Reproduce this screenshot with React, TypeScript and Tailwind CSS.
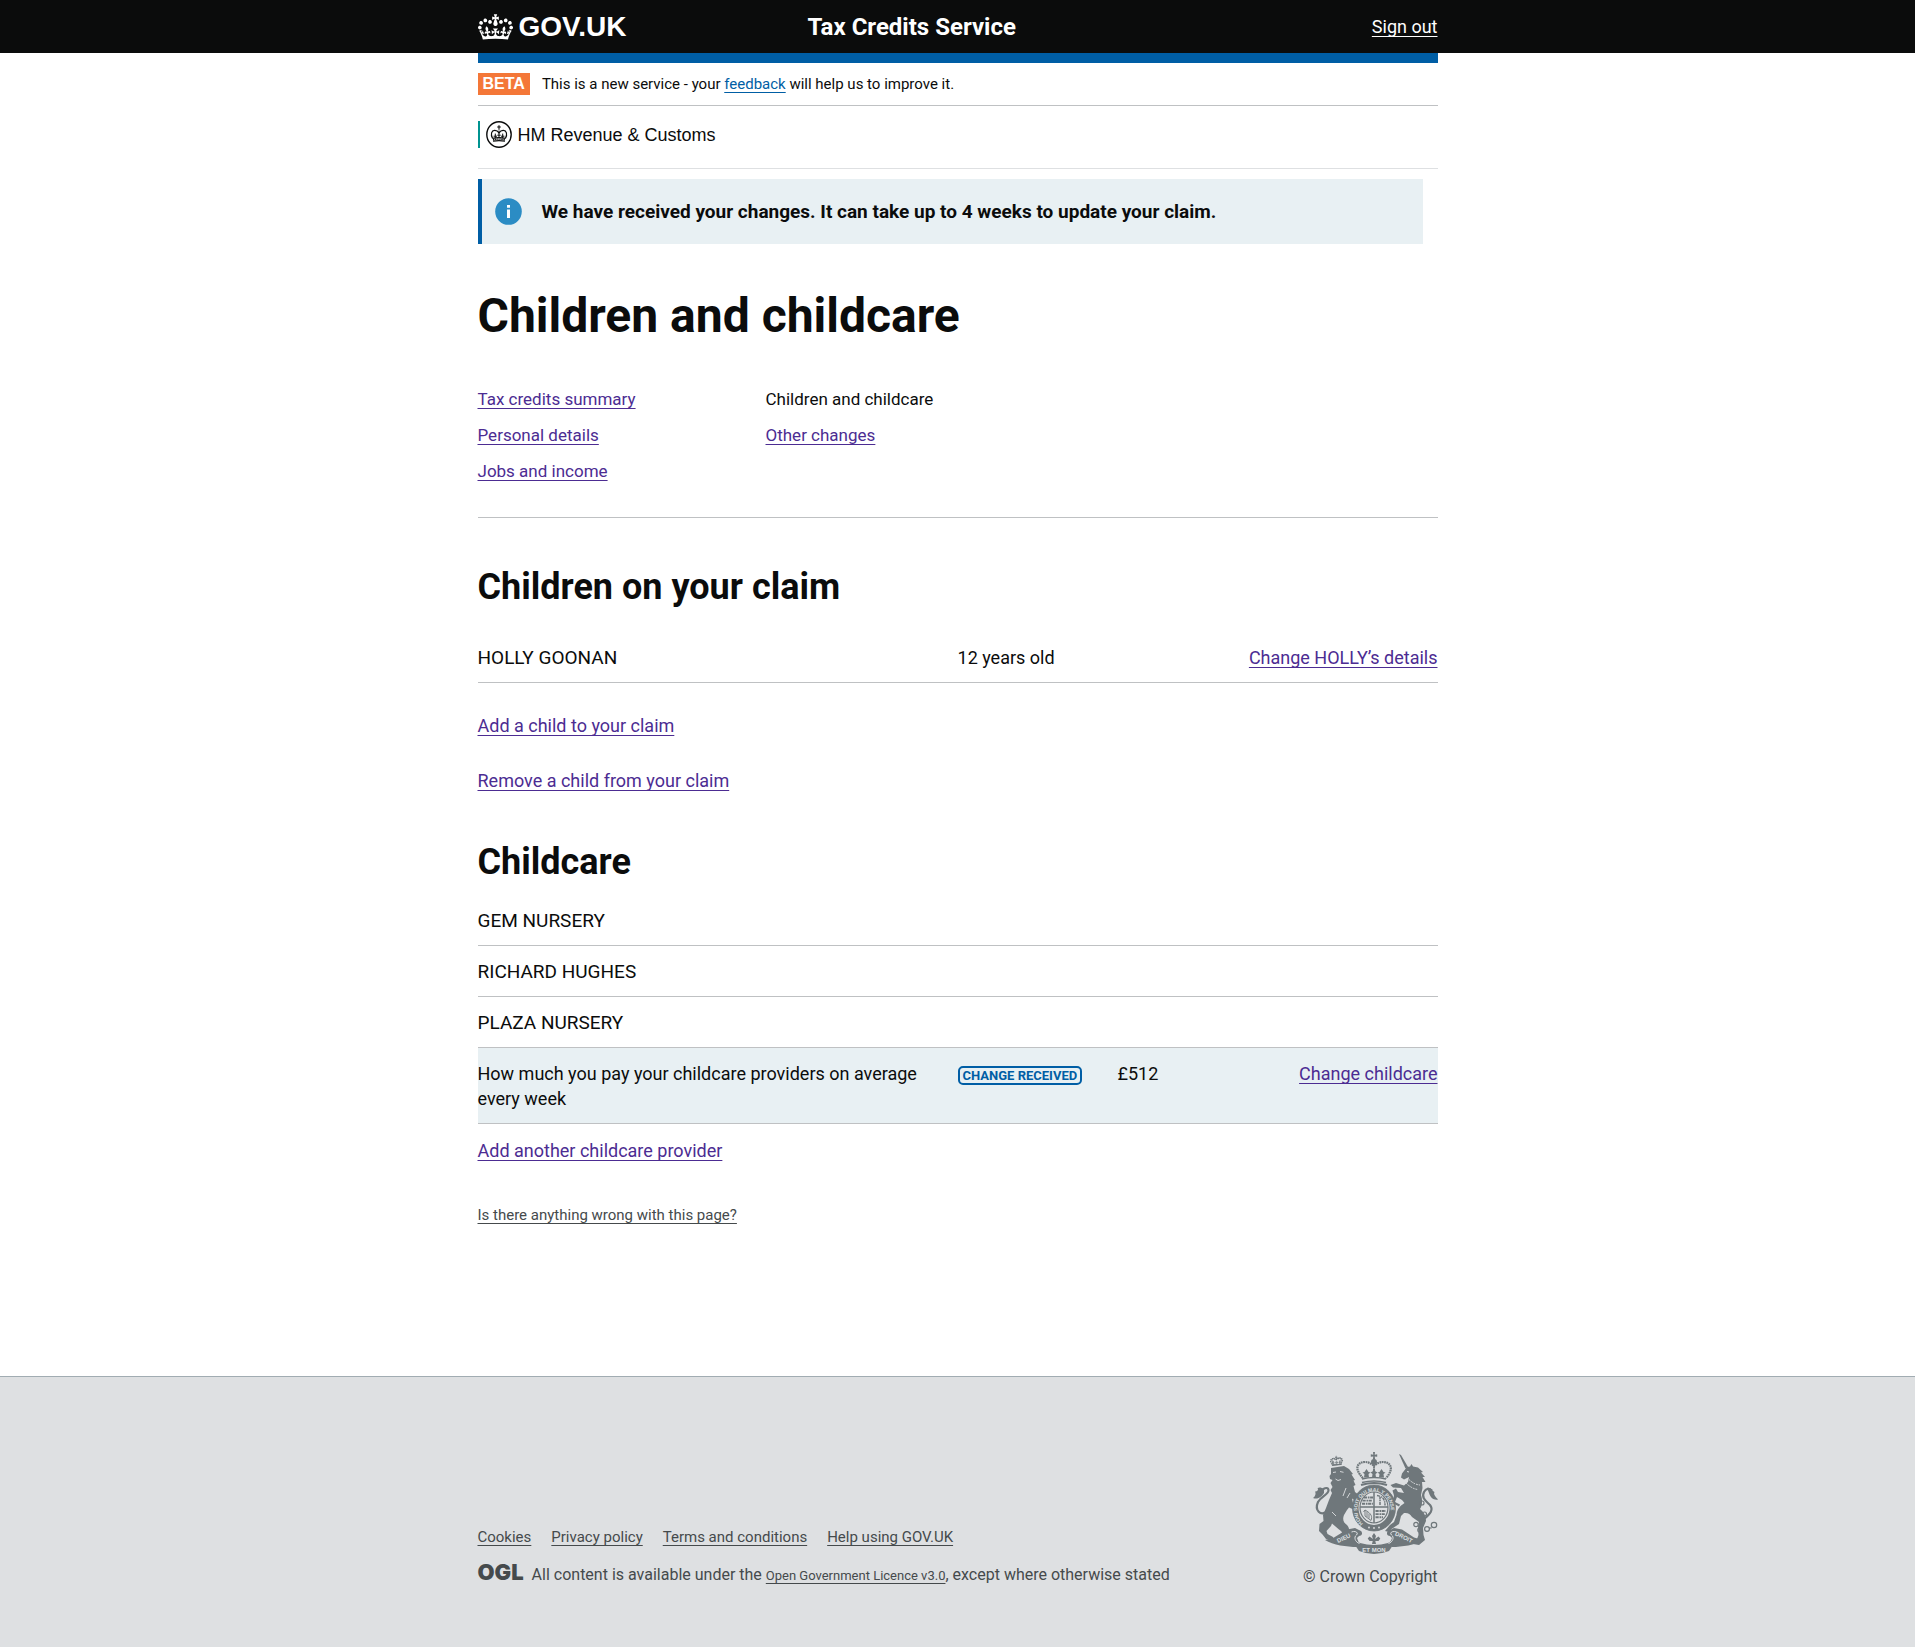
import React from "react";

const CROWN =
  "M25 30.2c3.5 1.5 7.7-.2 9.1-3.7 1.5-3.6-.2-7.8-3.9-9.2-3.6-1.4-7.6.3-9.1 3.9-1.4 3.5.3 7.5 3.9 9zM9 39.5c3.6 1.5 7.8-.2 9.2-3.7 1.5-3.6-.2-7.8-3.9-9.1-3.6-1.5-7.6.2-9.1 3.8-1.4 3.5.3 7.5 3.8 9zM4.4 57.2c3.5 1.5 7.7-.2 9.1-3.8 1.5-3.6-.2-7.7-3.9-9.1-3.5-1.5-7.6.3-9.1 3.8-1.4 3.5.3 7.6 3.9 9.1zm38.3-21.4c3.5 1.5 7.7-.2 9.1-3.8 1.5-3.6-.2-7.7-3.9-9.1-3.6-1.5-7.6.3-9.1 3.8-1.3 3.6.4 7.7 3.9 9.1zm64.4-5.6c-3.6 1.5-7.8-.2-9.1-3.7-1.5-3.6.2-7.8 3.8-9.2 3.6-1.4 7.7.3 9.2 3.9 1.3 3.5-.4 7.5-3.9 9zm15.9 9.3c-3.6 1.5-7.7-.2-9.1-3.7-1.5-3.6.2-7.8 3.7-9.1 3.6-1.5 7.7.2 9.2 3.8 1.5 3.5-.3 7.5-3.8 9zm4.7 17.7c-3.6 1.5-7.8-.2-9.2-3.8-1.5-3.6.2-7.7 3.9-9.1 3.6-1.5 7.7.3 9.2 3.8 1.3 3.5-.4 7.6-3.9 9.1zM89.3 35.8c-3.6 1.5-7.8-.2-9.2-3.8-1.4-3.6.2-7.7 3.9-9.1 3.6-1.5 7.7.3 9.2 3.8 1.4 3.6-.3 7.7-3.9 9.1zM69.7 17.7l8.9 4.7V9.3l-8.9 2.8c-.2-.3-.5-.6-.9-.9L72.4 0H59.6l3.5 11.2c-.3.3-.6.5-.9.9l-8.8-2.8v13.1l8.8-4.7c.3.3.6.7.9.9l-5 15.4v.1c-.2.8-.4 1.6-.4 2.4 0 4.1 3.1 7.5 7 8.1h.2c.3 0 .7.1 1 .1.4 0 .7 0 1-.1h.2c4-.6 7.1-4.1 7.1-8.1 0-.8-.1-1.7-.4-2.4V34l-5.1-15.4c.4-.2.7-.6 1-.9zM66 92.8c16.9 0 32.8 1.1 47.1 3.2 4-16.9 8.9-26.7 14-33.5l-9.6-3.4c1 4.9 1.1 7.2 0 10.2-1.5-1.4-3-4.3-4.2-8.7L108.6 76c2.8-2 5-3.2 7.5-3.3-4.4 9.4-10 11.9-13.6 11.2-4.3-.8-6.3-4.6-5.6-7.9 1-4.7 5.7-5.9 8-.5 4.3-8.7-3-11.4-7.6-8.8 7.1-7.2 7.9-13.5 2.1-21.1-8 6.1-8.1 12.3-4.5 20.8-4.7-5.4-12.1-2.5-9.5 6.2 3.4-5.2 7.9-2 7.2 3.1-.6 4.3-6.4 7.8-13.5 7.2-10.3-.9-10.9-8-11.2-13.8 2.5-.5 7.1 1.8 11 7.3L80.2 60c-4.1 4.4-8 5.3-12.3 5.4 1.4-4.4 8-11.6 8-11.6H55.5s6.4 7.2 7.9 11.6c-4.2-.1-8-1-12.3-5.4l1.4 16.4c3.9-5.5 8.5-7.7 10.9-7.3-.3 5.8-.9 12.8-11.1 13.8-7.2.6-12.9-2.9-13.5-7.2-.7-5 3.8-8.3 7.1-3.1 2.7-8.7-4.6-11.6-9.4-6.2 3.7-8.5 3.6-14.7-4.6-20.8-5.8 7.6-5 13.9 2.2 21.1-4.7-2.6-11.9.1-7.7 8.8 2.3-5.5 7.1-4.2 8.1.5.7 3.3-1.3 7.1-5.7 7.9-3.5.7-9-1.8-13.5-11.2 2.5.1 4.7 1.3 7.5 3.3l-4.7-15.4c-1.2 4.4-2.7 7.2-4.3 8.7-1.1-3-.9-5.3 0-10.2l-9.5 3.4c5 6.9 9.9 16.7 14 33.5 14.8-2.1 30.8-3.2 47.7-3.2z";

const CONTAINER = "mx-auto w-full max-w-[960px]";
const UNDERLINE = "underline decoration-1 underline-offset-3 [text-decoration-skip-ink:none]";

type LinkProps = { children: React.ReactNode; tone?: string };

function Link({ children, tone = "text-[#4c2c92]" }: LinkProps) {
  return (
    <a href="#" className={`${tone} ${UNDERLINE}`}>
      {children}
    </a>
  );
}

function HmrcCrest() {
  return (
    <svg viewBox="0 0 26 27" className="h-[27px] w-[26px]" aria-hidden="true">
      <ellipse cx="13" cy="13.5" rx="12.2" ry="12.7" fill="none" stroke="#0b0c0c" strokeWidth="1.4" />
      <g fill="none" stroke="#0b0c0c">
        <path d="M13 4.2v4.6M11.2 6h3.6" strokeWidth="1.1" />
        <path d="M6.6 17.5C4.2 13 5.6 9.6 8.6 9.4c2.2-.1 3.6 1.2 4.4 2.4.8-1.2 2.2-2.5 4.4-2.4 3 .2 4.4 3.6 2 8.1" strokeWidth="1.2" />
        <path d="M13 9.5V17M9.3 12.6v4.6M16.7 12.6v4.6M7.6 15.2h3.4M11.3 14.2h3.4M15 15.2h3.4" strokeWidth="1" />
        <path d="M6.6 17.4q6.4-1.6 12.8 0M7 20.2q6-1.3 12 0" strokeWidth="1.2" />
        <path d="M7 18.8q6-1.4 12 0" strokeWidth="1.4" strokeDasharray="1.4 .7" />
      </g>
    </svg>
  );
}

function CoatOfArms() {
  const ink = "#6f777b";
  const paper = "#dee0e2";
  return (
    <svg viewBox="0 0 125 102" className="h-[102px] w-[125px]" role="img" aria-label="Royal coat of arms">
      {/* lion crown */}
      <g transform="translate(16.5 4.5) rotate(-5) scale(.1)" fill={ink}>
        <path d={CROWN} />
        <path d="M20 30Q40 10 62 36Q90 10 116 30L104 90H28Z" fill="none" stroke={ink} strokeWidth="9" />
      </g>
      {/* lion tail */}
      <path
        d="M15 59C7 65 1.500 58 5 50C8 44 15 43 15.500 38.500C15.600 35.500 12 35 9.500 38"
        fill="none"
        stroke={ink}
        strokeWidth="2.200"
      />
      <path d="M11 37C8 35 5.500 35 4.500 36.500C6 38 4 39.500 2 39.500C3.500 42 1.500 45 0 46C5 48 9 44.500 11 41Z" fill={ink} />
      {/* lion */}
      <path
        d="M18 16L31 14L36 17L40 22L38.500 22.500L42 28L40.500 28.500L42.500 33L40.500 34L42 40L46 43L49 42L50.500 44L46 48L43 49L39 46.500L40 51L44 54L47 53.500L48 56L43 58.500L36 55.500L34 58L31 63C29 68 31 71 34 73C37 76 36 80 37 83L41 85L40 88L31 87.500C30 82 29 79 26 77.500L19 71.500L18 74L13.500 79L14.500 82L20 85L20.500 88.500L13 87L9.500 82.500L6 79L6.500 72L10.500 69L10 63L13 56L16 48L19 41L17.500 38L19.500 35L17.500 31L19.500 28L17 27L16.500 24L18 22Z"
        fill={ink}
      />
      <path d="M20 20.500l3-.5M27 19.500l3.500.8M22.500 27l2.500 1.500 3-1M33 36l-3 8M37 41l-3 5M19 60l4 4" stroke={paper} strokeWidth=".9" fill="none" />
      {/* horn */}
      <path d="M86 2L88 3L95 15L92.500 16.500Z" fill={ink} />
      {/* unicorn */}
      <path
        d="M94 15L97 14.500L98.500 12L100 14.500L105 15.500L110 20L108 20.500L112 25L109.500 25L112.500 30L109 30L109.500 36L108 43C110 49 109 54 107 57C111 60 113 64 113 69L110 76L110.500 83L112 88L106 93L100 92L104 87L105.500 83L105 74L106 70L99 65C97 62 95 60.500 91 61L88 64L86 72L78.500 77L76 80L72 79L77 73L81 70L83.500 63C84 57 87 54 91.500 51L89 48L84 45L82 50L87 52.500L86 54.500L79.500 51L81 43.500L79.500 38.500L83 36.500L85 40L91 41L88 36L80 35.500L77.500 33L83 31L91 33.500L95 30L96 25L91 27.500L88 25.500L89 21.500Z"
        fill={ink}
      />
      <path d="M93 31q6 6 12 6.500M96 27.500q5 5 11 5.500" stroke={paper} strokeWidth="1" strokeDasharray="1.800 1" fill="none" />
      <path d="M94 19.500l2 .5" stroke={paper} strokeWidth="1" />
      {/* unicorn tail */}
      <path
        d="M111 67C117 62 121 58 117 53C113 49 108 46 111 40C113 36 116 36 119 38.500"
        fill="none"
        stroke={ink}
        strokeWidth="2.200"
      />
      <path d="M114 36C118 34.500 119 39 121.500 40C120 42.500 123 45 125 47.500C121 48.500 117.500 46 116 41Z" fill={ink} />
      {/* chain */}
      <g fill="none" stroke={ink} strokeWidth="1.200">
        <circle cx="109" cy="51" r="2" />
        <circle cx="111.500" cy="62" r="2" />
        <circle cx="103" cy="72.500" r="2.200" />
        <circle cx="107" cy="78" r="2.200" />
        <circle cx="114" cy="77" r="2.400" />
        <circle cx="121" cy="73" r="2.700" />
        <path d="M116.200 76h2.400" />
      </g>
      {/* crown above the shield */}
      <g fill="none" stroke={ink}>
        <path d="M50 26C40 16 45 10 52 10C57 10 60 13 61 14C62 13 65 10 70 10C77 10 82 16 73 26" strokeWidth="2.200" strokeDasharray="1.700 .6" />
        <path d="M61 13V26" strokeWidth="1.800" strokeDasharray="1.500 .5" />
        <path d="M49 27q12-3 24 0M49 30.500q12-3 24 0" strokeWidth="1.700" />
        <path d="M48 33q13-4 26 0" strokeWidth="2.200" />
      </g>
      <g fill={ink}>
        <circle cx="61" cy="10" r="3" />
        <path d="M60 0h2l-.3 2.700 2.500-.4v2.400l-2.500-.3.500 3h-2.400l.5-3-2.500.3V2.300l2.500.4z" />
        <path d="M53.500 17l2 3 2 .5-2 1.500.5 3.500h-5l.5-3.500-2-1.500 2-.5zM68.500 17l2 3 2 .5-2 1.500.5 3.500h-5l.5-3.500-2-1.500 2-.5zM61 16l1.500 3.500 2 1-2 1.500.5 3.500h-4l.5-3.500-2-1.500 2-1z" />
      </g>
      {/* garter and shield */}
      <ellipse cx="61" cy="56" rx="18.500" ry="20" fill={paper} stroke={ink} strokeWidth="6" />
      <ellipse cx="61" cy="56" rx="21.500" ry="23" fill="none" stroke={ink} strokeWidth=".8" />
      <path id="garter-text" d="M50 71.500A16.800 18.300 0 1 1 72 71.500" fill="none" />
      <text fill={paper} fontSize="5" fontWeight="700" fontFamily="Liberation Sans, sans-serif">
        <textPath href="#garter-text">HONI SOIT QUI MAL Y PENSE</textPath>
      </text>
      <circle cx="56" cy="75.500" r=".9" fill={paper} />
      <circle cx="61" cy="76" r=".9" fill={paper} />
      <circle cx="66" cy="75.500" r=".9" fill={paper} />
      <ellipse cx="61" cy="55.500" rx="14" ry="15.500" fill={paper} stroke={ink} strokeWidth="1.200" />
      <path d="M61 40v31M47 55h28" stroke={ink} strokeWidth="1.500" />
      <g stroke={ink} strokeWidth="1.900" fill="none" strokeDasharray="3.200 .8 1.500 .6">
        <path d="M51 45.500h9M49.500 48.600h10M49 51.700h11M62.500 59h10.500M62.500 62.100h9.500M62.500 65.200h7.500" />
        <path d="M64 43.500c6 1 8 4 8 10M67 53V45" strokeWidth="1.500" />
      </g>
      <path d="M52 58v6l6 4.500c1.500-4 .5-7-6-10.500zM54 59.500v5.500M56 61.500v5M52 58l-1.500 2" stroke={ink} strokeWidth=".9" fill="none" />
      {/* fleur-de-lis at the foot of the shield */}
      <path d="M61 81l2 3-1 3 3.500-2.500 1.800 2-1.800 2.500H62.300l.7 3h-4l.7-3h-3.200l-1.800-2.500 1.800-2L60 87l-1-3z" fill={ink} />
      {/* motto ribbon */}
      <path d="M12 88L21 85.500L34 77.500L42 76L48 79C50 81 49 84 46 84L44 86L45.500 90L44 95C34 95 20 93 12 88Z" fill={ink} />
      <path d="M110 88L101 85.500L89 77.500L81 76L75 79C73 81 74 84 77 84L79 86L77.500 90L79 95C89 95 102 93 110 88Z" fill={ink} />
      <path d="M40.500 84C43 88 44 90 47 91Q61 95 75 91C78 90 79 88 81 84L80 93L76 99Q61 105 46 99L42 93Z" fill={ink} />
      <path d="M38.500 80C42 78.500 46 80.500 43.500 83C40.500 85 42 90 46.500 91.500M83.500 80C80 78.500 76 80.500 78.500 83C81.500 85 80 90 75.500 91.500" stroke={paper} strokeWidth="1" fill="none" />
      <g fill={paper} fontSize="6" fontWeight="700" fontFamily="Liberation Sans, sans-serif" textAnchor="middle">
        <text transform="translate(31.500 88) rotate(-24)">DIEU</text>
        <text x="61" y="100">ET MON</text>
        <text transform="translate(90 87) rotate(26)">DROIT</text>
      </g>
    </svg>
  );
}

function Header() {
  return (
    <header className="bg-[#0b0c0c] text-white">
      <div className={`${CONTAINER} flex h-[53px] items-center`}>
        <a href="#" className="flex w-[330px] items-center gap-1.5 font-['Liberation_Sans',Arial,sans-serif] text-[28px] leading-8 font-bold">
          <svg viewBox="0 0 132 97" className="h-[26px] w-[35px]" fill="currentColor" aria-hidden="true">
            <path d={CROWN} />
          </svg>
          <span>GOV.UK</span>
        </a>
        <a href="#" className="text-2xl font-bold">
          Tax Credits Service
        </a>
        <span className="ml-auto text-lg">
          <Link tone="text-white">Sign out</Link>
        </span>
      </div>
    </header>
  );
}

function Banner() {
  return (
    <>
      <div className="h-2.5 bg-[#005ea5]" />
      <div className="flex items-center gap-3 border-b border-[#bfc1c3] py-2.5">
        <strong className="bg-[#f47738] px-[5px] font-['Liberation_Sans',Arial,sans-serif] text-base leading-[22px] text-white">BETA</strong>
        <p className="text-[15px] leading-[22px]">
          This is a new service - your <Link tone="text-[#005ea5]">feedback</Link> will help us to improve it.
        </p>
      </div>
      <div className="border-b border-[#dee0e2] pt-[15px] pb-5">
        <div className="flex h-[27px] items-center gap-1.5 border-l-2 border-[#009390] pl-1.5 font-['Liberation_Sans',Arial,sans-serif] text-lg">
          <HmrcCrest />
          <span>HM Revenue &amp; Customs</span>
        </div>
      </div>
    </>
  );
}

function Notice() {
  return (
    <div className="mt-2.5 mr-[15px] flex items-center gap-5 border-l-4 border-[#005ea5] bg-[#e8f0f3] py-[19px] pl-[13px]">
      <svg viewBox="0 0 27 27" className="size-[27px]" aria-hidden="true">
        <circle cx="13.5" cy="13.5" r="13.3" fill="#2b8cc4" />
        <path d="M12 7h3v2.700h-3zM12 11.500h3V20h-3z" fill="#fff" />
      </svg>
      <p className="text-[19px] leading-[25px] font-bold">We have received your changes. It can take up to 4 weeks to update your claim.</p>
    </div>
  );
}

function PageNav() {
  return (
    <nav className="mt-[38px] flex border-b border-[#bfc1c3] pb-7 text-[17px] leading-9" aria-label="Sections">
      <ul className="w-[30%]">
        <li><Link>Tax credits summary</Link></li>
        <li><Link>Personal details</Link></li>
        <li><Link>Jobs and income</Link></li>
      </ul>
      <ul className="w-[30%]">
        <li>Children and childcare</li>
        <li><Link>Other changes</Link></li>
      </ul>
    </nav>
  );
}

const CELL = "border-b border-[#bfc1c3] pt-[13px] pb-3 align-top";

function Columns() {
  return (
    <colgroup>
      <col className="w-1/2" />
      <col className="w-1/6" />
      <col className="w-1/3" />
    </colgroup>
  );
}

function Children() {
  return (
    <section className="mt-11">
      <h2 className="text-4xl leading-[50px] font-bold">Children on your claim</h2>
      <table className="mt-5 w-full table-fixed text-lg leading-[25px]">
        <Columns />
        <tbody>
          <tr>
            <td className={`${CELL} text-[19px]`}>HOLLY GOONAN</td>
            <td className={CELL}>12 years old</td>
            <td className={`${CELL} text-right`}><Link>Change HOLLY’s details</Link></td>
          </tr>
        </tbody>
      </table>
      <p className="mt-[30px] text-lg leading-[25px]"><Link>Add a child to your claim</Link></p>
      <p className="mt-[30px] text-lg leading-[25px]"><Link>Remove a child from your claim</Link></p>
    </section>
  );
}

function Childcare() {
  return (
    <section className="mt-11">
      <h2 className="text-4xl leading-[50px] font-bold">Childcare</h2>
      <table className="mt-2 w-full table-fixed text-lg leading-[25px]">
        <Columns />
        <tbody>
          {["GEM NURSERY", "RICHARD HUGHES", "PLAZA NURSERY"].map((name) => (
            <tr key={name}>
              <td colSpan={3} className={`${CELL} text-[19px]`}>{name}</td>
            </tr>
          ))}
          <tr className="bg-[#e8f0f3]">
            <td className={`${CELL} pr-7`}>How much you pay your childcare providers on average every week</td>
            <td className={CELL}>
              <strong className="inline-block rounded-[5px] border-2 border-[#005ea5] px-[3px] text-[13px] leading-[15px] whitespace-nowrap text-[#005ea5]">
                CHANGE RECEIVED
              </strong>
            </td>
            <td className={CELL}>
              <div className="flex justify-between">
                <span>£512</span>
                <Link>Change childcare</Link>
              </div>
            </td>
          </tr>
        </tbody>
      </table>
      <p className="mt-3.5 text-lg leading-[25px]"><Link>Add another childcare provider</Link></p>
      <p className="mt-[42px] mb-20 text-[15px] leading-5"><Link tone="text-[#454a4c]">Is there anything wrong with this page?</Link></p>
    </section>
  );
}

function Footer() {
  return (
    <footer className="border-t border-[#a1acb2] bg-[#dee0e2] pt-[75px] pb-[60px] text-base text-[#454a4c]">
      <div className={`${CONTAINER} flex items-end justify-between`}>
        <div>
          <ul className="flex gap-5 text-[15px] leading-5">
            <li><Link tone="text-[#454a4c]">Cookies</Link></li>
            <li><Link tone="text-[#454a4c]">Privacy policy</Link></li>
            <li><Link tone="text-[#454a4c]">Terms and conditions</Link></li>
            <li><Link tone="text-[#454a4c]">Help using GOV.UK</Link></li>
          </ul>
          <div className="mt-3.5 flex items-baseline gap-2 leading-[22px]">
            <span className="font-['Inter',sans-serif] text-[22px] font-black">OGL</span>
            <p>
              All content is available under the{" "}
              <span className="text-[13px]"><Link tone="text-[#454a4c]">Open Government Licence v3.0</Link></span>, except where otherwise stated
            </p>
          </div>
        </div>
        <a href="#" className="flex flex-col items-end gap-[13px] leading-5">
          <CoatOfArms />
          <span>© Crown Copyright</span>
        </a>
      </div>
    </footer>
  );
}

export default function App() {
  return (
    <div className="flex min-h-screen flex-col bg-white font-['Roboto',Arial,sans-serif] text-[#0b0c0c]">
      <Header />
      <main className={`${CONTAINER} flex-1`}>
        <Banner />
        <Notice />
        <h1 className="mt-[45px] text-5xl leading-[54px] font-bold">Children and childcare</h1>
        <PageNav />
        <Children />
        <Childcare />
      </main>
      <Footer />
    </div>
  );
}
